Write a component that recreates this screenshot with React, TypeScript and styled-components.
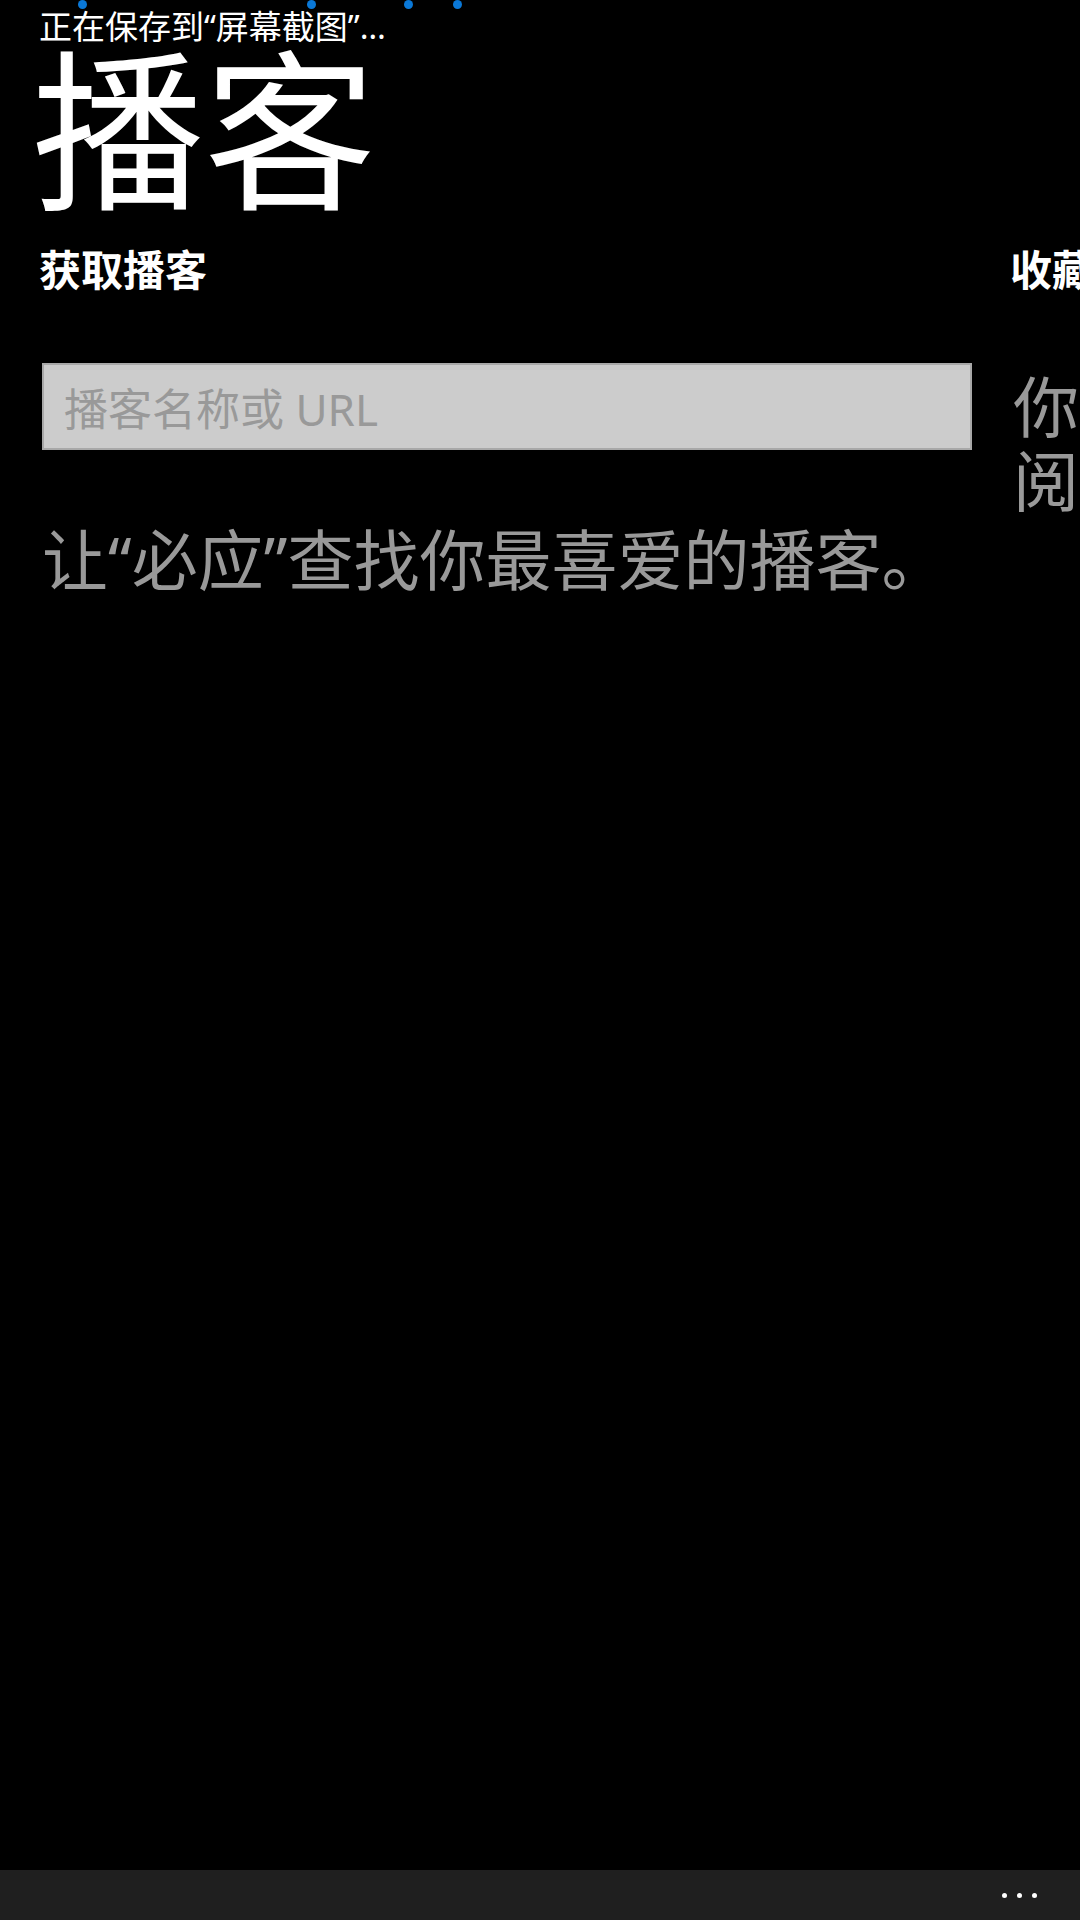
import * as React from "react"
import styled, { createGlobalStyle } from "styled-components"

const GlobalStyle = createGlobalStyle`
    html, body {
        margin: 0;
        padding: 0;
        background: #000;
    }
    body {
        font-family: "Noto Sans", "Noto Sans CJK SC", sans-serif;
        color: #fff;
    }
`

const Screen = styled.div`
    position: relative;
    width: 1080px;
    height: 1920px;
    display: flex;
    flex-direction: column;
    overflow: hidden;
    background: #000;
`

const Progress = styled.div`
    position: absolute;
    top: 0;
    left: 0;
    right: 0;
    height: 10px;
`

const ProgressDot = styled.span<{ x: number }>`
    position: absolute;
    top: 0;
    left: ${p => p.x - 4}px;
    width: 9px;
    height: 9px;
    border-radius: 50%;
    background: #0a78d7;
`

const StatusText = styled.div`
    padding: 9px 0 0 39px;
    font-size: 33px;
    line-height: 36px;
    white-space: nowrap;
`

const Panorama = styled.div`
    flex: 1 1 auto;
    display: flex;
    flex-direction: column;
    overflow: hidden;
`

const Title = styled.div`
    padding: 9px 0 0 32px;
    font-size: 172px;
    line-height: 150px;
    white-space: nowrap;
`

const Sections = styled.div`
    display: flex;
    flex-direction: row;
    padding-left: 39px;
    gap: 38px;
`

const Section = styled.div<{ width: number }>`
    flex: 0 0 ${p => p.width}px;
    min-width: 0;
    display: flex;
    flex-direction: column;
`

const SectionHeader = styled.div`
    font-size: 42px;
    font-weight: 700;
    line-height: 50px;
    margin-top: 41px;
    white-space: nowrap;
`

const SearchBox = styled.div`
    margin: 68px 0 0 3px;
    height: 87px;
    box-sizing: border-box;
    border: 2px solid #a8a8a8;
    background: #cccccc;
    display: flex;
    align-items: center;
    padding-left: 20px;
`

const Placeholder = styled.span`
    font-size: 44px;
    color: #999999;
    white-space: nowrap;
`

const Hint = styled.div<{ top: number }>`
    margin: ${p => p.top}px 0 0 3px;
    font-size: 66px;
    line-height: 74px;
    color: #999999;
    white-space: nowrap;
`

const AppBar = styled.div`
    flex: 0 0 50px;
    background: #1f1f1f;
    display: flex;
    flex-direction: row;
    justify-content: flex-end;
    align-items: center;
    gap: 10px;
    padding-right: 43px;
`

const MenuDot = styled.span`
    width: 5px;
    height: 5px;
    border-radius: 50%;
    background: #fff;
`

export default function App(): JSX.Element {
    return (
        <Screen>
            <GlobalStyle />
            <Progress>
                {[82, 311, 408, 457].map(x => (
                    <ProgressDot key={x} x={x} />
                ))}
            </Progress>
            <StatusText>正在保存到“屏幕截图”…</StatusText>
            <Panorama>
                <Title>播客</Title>
                <Sections>
                    <Section width={933}>
                        <SectionHeader>获取播客</SectionHeader>
                        <SearchBox>
                            <Placeholder>播客名称或 URL</Placeholder>
                        </SearchBox>
                        <Hint top={72}>让“必应”查找你最喜爱的播客。</Hint>
                    </Section>
                    <Section width={930}>
                        <SectionHeader>收藏</SectionHeader>
                        <Hint top={74}>
                            你还没有收藏任何播客。若要订
                            <br />
                            阅播客，请使用“获取播客”。
                        </Hint>
                    </Section>
                </Sections>
            </Panorama>
            <AppBar>
                <MenuDot />
                <MenuDot />
                <MenuDot />
            </AppBar>
        </Screen>
    )
}
